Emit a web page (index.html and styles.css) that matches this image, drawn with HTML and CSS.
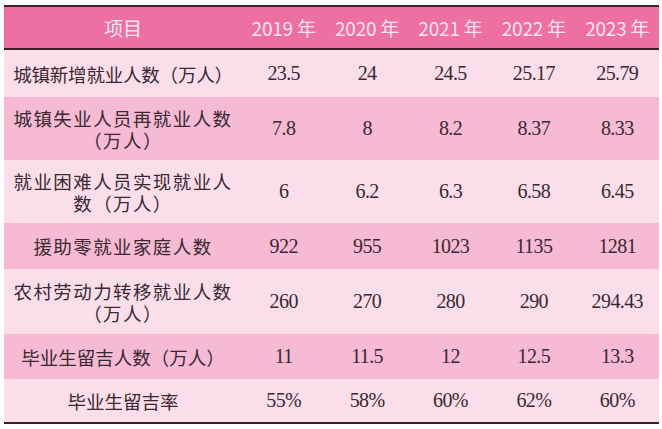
FILE: index.html
```html
<!DOCTYPE html>
<html lang="zh-CN">
<head>
<meta charset="utf-8">
<title>就业数据</title>
<link rel="stylesheet" href="styles.css">
</head>
<body>
<table class="stats">
  <thead>
    <tr class="head">
      <th class="item">项目</th>
      <th>2019 年</th>
      <th>2020 年</th>
      <th>2021 年</th>
      <th>2022 年</th>
      <th>2023 年</th>
    </tr>
  </thead>
  <tbody>
    <tr class="light r1">
      <td class="item tight">城镇新增就业人数（万人）</td>
      <td>23.5</td><td>24</td><td>24.5</td><td>25.17</td><td>25.79</td>
    </tr>
    <tr class="mid r2">
      <td class="item wide">城镇失业人员再就业人数<br>（万人）</td>
      <td>7.8</td><td>8</td><td>8.2</td><td>8.37</td><td>8.33</td>
    </tr>
    <tr class="light r3">
      <td class="item wide">就业困难人员实现就业人<br>数（万人）</td>
      <td>6</td><td>6.2</td><td>6.3</td><td>6.58</td><td>6.45</td>
    </tr>
    <tr class="mid r4">
      <td class="item wide">援助零就业家庭人数</td>
      <td>922</td><td>955</td><td>1023</td><td>1135</td><td>1281</td>
    </tr>
    <tr class="light r5">
      <td class="item wide">农村劳动力转移就业人数<br>（万人）</td>
      <td>260</td><td>270</td><td>280</td><td>290</td><td>294.43</td>
    </tr>
    <tr class="mid r6">
      <td class="item">毕业生留吉人数（万人）</td>
      <td>11</td><td>11.5</td><td>12</td><td>12.5</td><td>13.3</td>
    </tr>
    <tr class="light r7">
      <td class="item">毕业生留吉率</td>
      <td>55%</td><td>58%</td><td>60%</td><td>62%</td><td>60%</td>
    </tr>
  </tbody>
</table>
</body>
</html>
```

FILE: styles.css
```css
html, body {
  margin: 0;
  padding: 0;
  background: #ffffff;
}

body {
  padding: 5px 0 0 4px;
}

.stats {
  width: 655px;
  border-collapse: collapse;
  table-layout: fixed;
  border-top: 2px solid #3b1f2c;
  border-bottom: 2px solid #3b1f2c;
}

.stats th,
.stats td {
  padding: 0;
  text-align: center;
  vertical-align: middle;
}

.stats th.item,
.stats td.item {
  width: 238px;
}

.head {
  height: 43px;
  background: #ee6fa2;
  border-bottom: 2px solid #3b1f2c;
}

.head th {
  font-family: "Noto Sans CJK SC", "Noto Sans", sans-serif;
  font-weight: 400;
  font-size: 19px;
  color: #fde8f0;
  letter-spacing: -0.2px;
}

.stats td {
  font-family: "Liberation Serif", "DejaVu Serif", serif;
  font-size: 20px;
  letter-spacing: -0.6px;
  color: #3a2830;
}

.stats td.item {
  font-family: "Noto Sans CJK SC", "Noto Sans", sans-serif;
  font-size: 18.5px;
  line-height: 22px;
  letter-spacing: 0;
  color: #3a2830;
}

.stats td.wide {
  letter-spacing: 1.4px;
}

.stats td.tight {
  letter-spacing: -0.2px;
}

.light { background: #fcdeea; }
.mid { background: #f6bad3; }

.r1 { height: 48px; }
.r2 { height: 63px; }
.r3 { height: 63px; }
.r4 { height: 46px; }
.r5 { height: 65px; }
.r6 { height: 45px; }
.r7 { height: 44px; }
```
